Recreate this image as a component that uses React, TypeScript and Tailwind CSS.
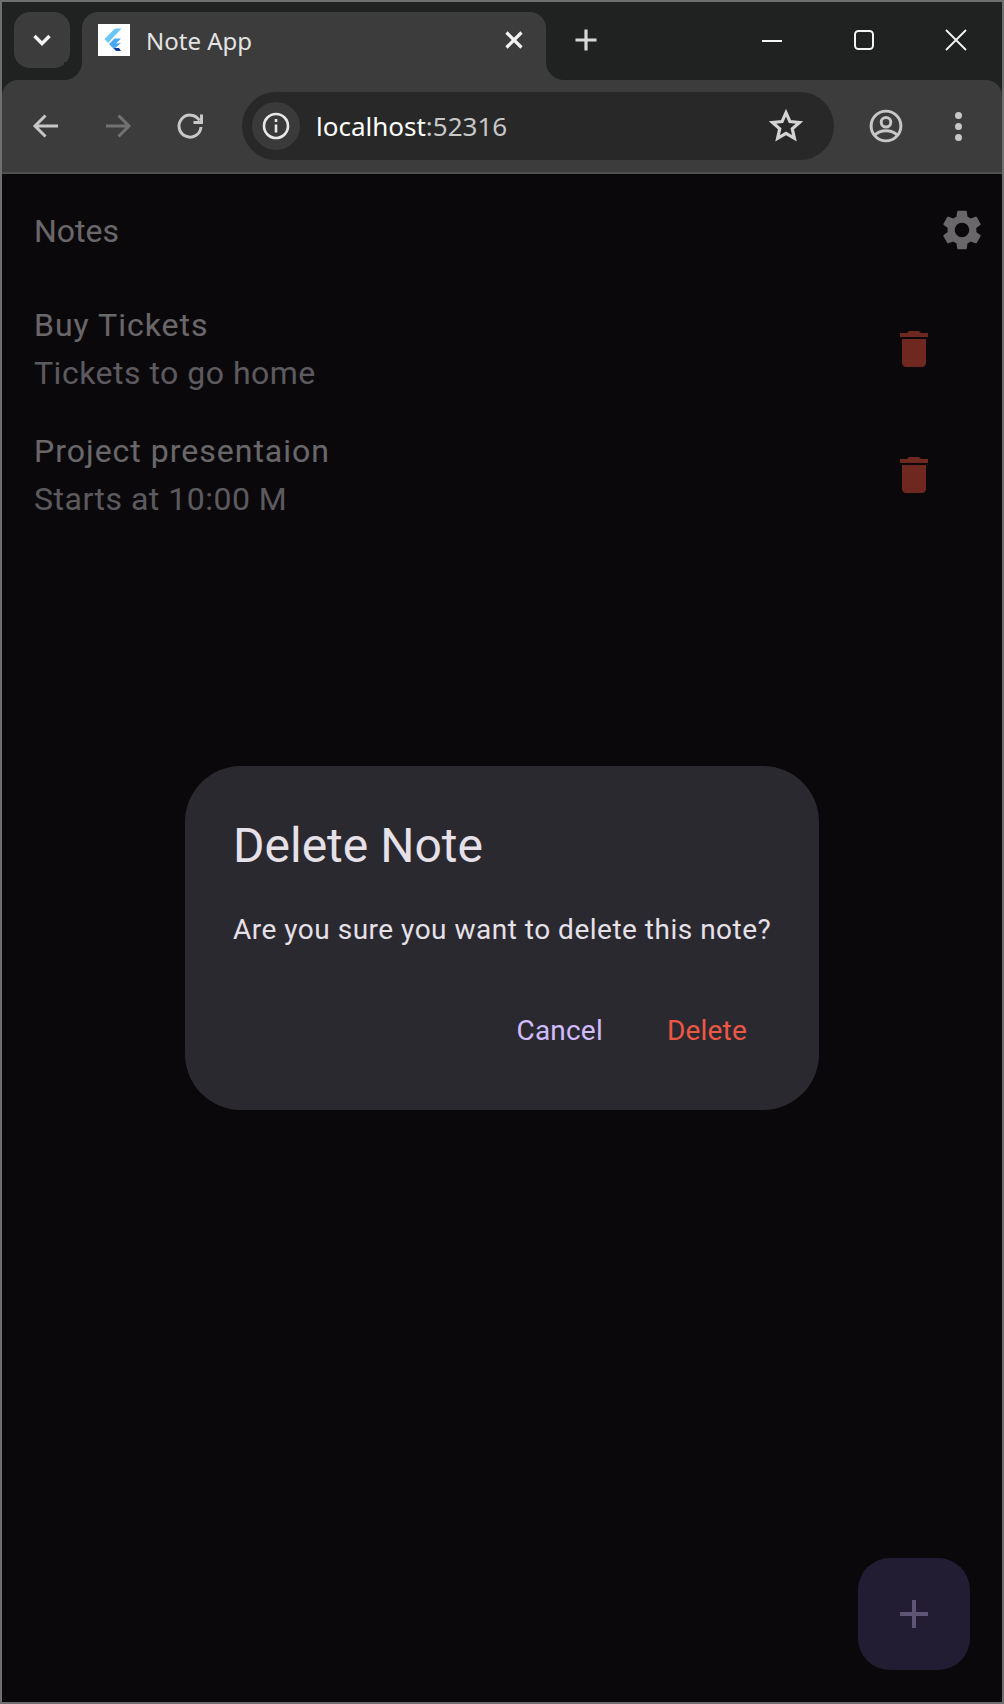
import { MdAdd, MdDelete, MdSettings } from "react-icons/md";

function Note({ title, body }: { title: string; body: string }) {
  return (
    <div className="flex h-[126px] items-center justify-between py-[15px] pl-8 pr-16">
      <div>
        <div className="text-[32px] leading-[48px] tracking-[1px] text-[#e6e0e9]">{title}</div>
        <div className="text-[32px] leading-[48px] tracking-[0.500px] text-[#cac4d0]">{body}</div>
      </div>
      <MdDelete className="size-12 text-[#ef5745]" />
    </div>
  );
}

function FlutterFavicon() {
  return (
    <svg viewBox="0 0 32 32" className="size-8 bg-white">
      <polygon points="23.5,4.5 17,4.5 6.5,15 10,19" fill="#6cc6f5" />
      <polygon points="23,14.5 16.5,14.5 11,20 16,25 23,19 18,19.5" fill="#4aa8f0" />
      <polygon points="15.5,24 21,24 23,27 18,27" fill="#0d3a9a" />
    </svg>
  );
}

export default function App() {
  return (
    <div className="flex h-[1704px] w-[1004px] flex-col overflow-hidden border-2 border-[#6f6f6f] bg-[#202222] font-['Noto_Sans',sans-serif]">
      <header className="flex h-[78px] shrink-0 items-start pl-3 pt-[10px]">
        <button className="flex h-14 w-14 items-center justify-center rounded-2xl bg-[#3c3c3c]">
          <svg viewBox="0 0 24 24" className="size-6" fill="none" stroke="#f4f4f4" strokeWidth="3.400">
            <path d="M4.500 8 12 15.500 19.500 8" />
          </svg>
        </button>
        <div className="relative ml-3 flex h-[68px] w-[464px] items-center rounded-t-2xl bg-[#3c3c3c] pb-3 pl-4 pr-4">
          <div className="absolute -left-[18px] bottom-0 size-[18px] bg-[#3c3c3c]">
            <div className="size-full rounded-br-[18px] bg-[#202222]" />
          </div>
          <div className="absolute -right-[18px] bottom-0 size-[18px] bg-[#3c3c3c]">
            <div className="size-full rounded-bl-[18px] bg-[#202222]" />
          </div>
          <FlutterFavicon />
          <span className="ml-4 flex-1 pt-[2px] text-[24px] leading-8 text-[#e3e3e3]">Note App</span>
          <svg viewBox="0 0 32 32" className="size-8" fill="none" stroke="#f2f2f2" strokeWidth="3.200">
            <path d="M8.500 8.500l15 15M23.500 8.500l-15 15" />
          </svg>
        </div>
        <button className="ml-3 flex h-14 w-14 items-center justify-center">
          <svg viewBox="0 0 32 32" className="size-8" fill="none" stroke="#d8d8d8" strokeWidth="3.200">
            <path d="M16 5.500v21M5.500 16h21" />
          </svg>
        </button>
        <div className="ml-auto flex h-14 items-center">
          <div className="flex w-[92px] justify-center">
            <svg viewBox="0 0 24 24" className="size-6" fill="none" stroke="#f4f4f4" strokeWidth="2">
              <path d="M2 13h20" />
            </svg>
          </div>
          <div className="flex w-[92px] justify-center">
            <svg viewBox="0 0 24 24" className="size-6" fill="none" stroke="#f4f4f4" strokeWidth="2">
              <rect x="3" y="3" width="18" height="18" rx="3.500" />
            </svg>
          </div>
          <div className="flex w-[92px] justify-center">
            <svg viewBox="0 0 24 24" className="size-6" fill="none" stroke="#f4f4f4" strokeWidth="1.800">
              <path d="M2 2l20 20M22 2 2 22" />
            </svg>
          </div>
        </div>
      </header>

      <nav className="flex h-[94px] shrink-0 items-center rounded-t-2xl border-b-2 border-[#505050] bg-[#3c3c3c] pl-2">
        <button className="flex w-[72px] justify-center">
          <svg viewBox="0 0 32 32" className="size-8" fill="none" stroke="#c7c7c7" strokeWidth="3">
            <path d="M28 16H6M15.500 5.500 5 16l10.500 10.500" />
          </svg>
        </button>
        <button className="flex w-[72px] justify-center">
          <svg viewBox="0 0 32 32" className="size-8" fill="none" stroke="#727272" strokeWidth="3">
            <path d="M4 16h22M16.500 5.500 27 16 16.500 26.500" />
          </svg>
        </button>
        <button className="flex w-[72px] justify-center">
          <svg viewBox="0 0 32 32" className="size-8" fill="none" stroke="#c7c7c7" strokeWidth="3">
            <path d="M25.500 10.500A11 11 0 1 0 27 17" />
            <path d="M27.500 4.500v8h-8" />
          </svg>
        </button>
        <div className="ml-4 flex h-[68px] w-[592px] items-center rounded-full bg-[#282828] pl-[10px] pr-[31px]">
          <div className="flex size-12 items-center justify-center rounded-full bg-[#3a3a3a]">
            <svg viewBox="0 0 32 32" className="size-8" fill="none" stroke="#e8e8e8" strokeWidth="2.600">
              <circle cx="16" cy="16" r="12" />
              <path d="M16 14.500v8M16 9v3" />
            </svg>
          </div>
          <div className="ml-4 flex-1 pb-[1px] text-[26px] leading-8 text-white">
            localhost<span className="text-[#c7c7c7]">:52316</span>
          </div>
          <svg viewBox="0 0 32 32" className="size-[34px]" fill="none" stroke="#d4d4d4" strokeWidth="3">
            <path d="M16 3.500l3.700 8.300 9 .900-6.800 6 2 8.900L16 23l-7.900 4.600 2-8.900-6.800-6 9-.900z" />
          </svg>
        </div>
        <button className="ml-4 flex w-[72px] justify-center">
          <svg viewBox="0 0 32 32" className="size-[34px]" fill="none" stroke="#c7c7c7" strokeWidth="2.800">
            <circle cx="16" cy="16" r="14" />
            <circle cx="16" cy="12.500" r="4.500" />
            <path d="M5.500 24.500c5-5.500 16-5.500 21 0" />
          </svg>
        </button>
        <button className="flex w-[72px] flex-col items-center gap-1">
          <span className="size-[7px] rounded-full bg-[#c7c7c7]" />
          <span className="size-[7px] rounded-full bg-[#c7c7c7]" />
          <span className="size-[7px] rounded-full bg-[#c7c7c7]" />
        </button>
      </nav>

      <main className="relative flex-1 bg-[#161218] font-['Roboto',sans-serif]">
        <div className="flex h-[112px] items-center justify-between pl-8 pr-4">
          <h1 className="pt-[2px] text-[32px] leading-[48px] text-[#e6e0e9]">Notes</h1>
          <MdSettings className="size-12 text-[#e6e0e9]" />
        </div>
        <Note title="Buy Tickets" body="Tickets to go home" />
        <Note title="Project presentaion" body="Starts at 10:00 M" />

        <button className="absolute bottom-8 right-8 flex size-[112px] items-center justify-center rounded-[32px] bg-[#4e3f6f] text-[#d0bcff]">
          <MdAdd className="size-12" />
        </button>

        <div className="absolute inset-0 flex items-center justify-center bg-black/54">
          <div className="h-[344px] w-[634px] rounded-[56px] bg-[#2b2930] p-12">
            <h2 className="text-[48px] leading-16 text-[#e6e0e9]">Delete Note</h2>
            <p className="mt-8 whitespace-nowrap text-[28px] leading-10 tracking-[0.500px] text-[#e6e0e9]">
              Are you sure you want to delete this note?
            </p>
            <div className="mt-12 flex h-16 items-center justify-end pt-[2px]">
              <button className="px-6 text-[28px] leading-10 tracking-[0.200px] text-[#d0bcff]">Cancel</button>
              <button className="ml-4 px-6 text-[28px] leading-10 tracking-[0.200px] text-[#ef5745]">Delete</button>
            </div>
          </div>
        </div>
      </main>
    </div>
  );
}
